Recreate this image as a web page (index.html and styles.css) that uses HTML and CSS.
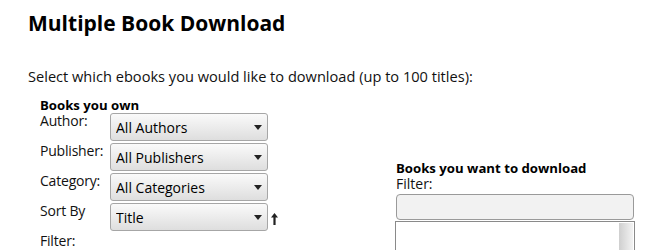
FILE: index.html
```html
<!DOCTYPE html>
<html lang="en">
<head>
    <meta charset="UTF-8">
    <meta name="viewport" content="width=device-width, initial-scale=1.0">
    <title>Multiple Book Download</title>
    <link rel="stylesheet" href="styles.css">
</head>
<body>
    <div class="page">
        <h1>Multiple Book Download</h1>
        <p class="intro">Select which ebooks you would like to download (up to 100 titles):</p>

        <div class="columns">
            <!-- Left: filters for owned books -->
            <div class="owned">
                <h3>Books you own</h3>
                <div class="filters">
                    <label for="author">Author:</label>
                    <div class="select-wrap">
                        <select id="author"><option>All Authors</option></select>
                        <svg class="caret" width="8" height="5" viewBox="0 0 8 5"><path d="M0 0h8L4 5z" fill="#222"/></svg>
                    </div>
                    <span></span>

                    <label for="publisher">Publisher:</label>
                    <div class="select-wrap">
                        <select id="publisher"><option>All Publishers</option></select>
                        <svg class="caret" width="8" height="5" viewBox="0 0 8 5"><path d="M0 0h8L4 5z" fill="#222"/></svg>
                    </div>
                    <span></span>

                    <label for="category">Category:</label>
                    <div class="select-wrap">
                        <select id="category"><option>All Categories</option></select>
                        <svg class="caret" width="8" height="5" viewBox="0 0 8 5"><path d="M0 0h8L4 5z" fill="#222"/></svg>
                    </div>
                    <span></span>

                    <label for="sort">Sort By</label>
                    <div class="select-wrap">
                        <select id="sort"><option>Title</option><option>Author</option></select>
                        <svg class="caret" width="8" height="5" viewBox="0 0 8 5"><path d="M0 0h8L4 5z" fill="#222"/></svg>
                    </div>
                    <button class="sort-dir" title="Ascending">
                        <svg width="7" height="12" viewBox="0 0 7 12"><path d="M3.5 0L7 4.5H4.6V12H2.4V4.5H0z" fill="#222"/></svg>
                    </button>

                    <label for="own-filter">Filter:</label>
                    <span></span>
                    <span></span>
                </div>
                <input type="text" id="own-filter" class="text-input">
            </div>

            <!-- Right: chosen books -->
            <div class="wanted">
                <h3>Books you want to download</h3>
                <label for="want-filter">Filter:</label>
                <input type="text" id="want-filter" class="text-input">
                <div class="listbox">
                    <div class="scrollbar"></div>
                </div>
            </div>
        </div>
    </div>
</body>
</html>
```

FILE: styles.css
```css
/* Reset */
* {
    margin: 0;
    padding: 0;
    box-sizing: border-box;
}

body {
    font-family: 'Open Sans', 'DejaVu Sans', sans-serif;
    font-size: 14px;
    line-height: 16px;
    color: #111;
    background-color: #fff;
}

.page {
    padding: 9px 28px 0;
}

h1 {
    font-size: 21px;
    line-height: 28px;
    font-weight: bold;
    color: #000;
}

.intro {
    margin-top: 31px;
    font-size: 14.6px;
}

h3 {
    font-size: 13.2px;
    font-weight: bold;
    color: #000;
}

/* Two columns */
.columns {
    display: flex;
    margin-top: 13px;
}

.owned {
    width: 356px;
    margin-left: 12px;
}

.filters {
    display: grid;
    grid-template-columns: 70px 158px 1fr;
    row-gap: 2px;
    align-items: start;
}

.filters label {
    display: block;
    letter-spacing: -0.2px;
}

.select-wrap {
    position: relative;
    height: 28px;
}

select {
    appearance: none;
    -webkit-appearance: none;
    width: 100%;
    height: 28px;
    padding: 0 20px 0 5px;
    font-family: 'Open Sans', sans-serif;
    font-size: 14px;
    color: #000;
    border: 1px solid #a6a6a6;
    border-radius: 3px;
    background: linear-gradient(#fafafa, #dedede);
}

.caret {
    position: absolute;
    right: 6px;
    top: 12px;
    pointer-events: none;
}

.sort-dir {
    justify-self: start;
    border: none;
    background: none;
    margin: 10px 0 0 3px;
    cursor: pointer;
    line-height: 0;
}

.text-input {
    display: block;
    height: 26px;
    border: 1px solid #9a9a9a;
    border-radius: 4px;
    background-color: #f2f2f2;
}

.owned .text-input {
    width: 158px;
    margin: 4px 0 0 70px;
}

.wanted {
    margin-top: 63px;
}

.wanted label {
    display: block;
}

.wanted .text-input {
    width: 238px;
    margin-top: 2px;
}

.listbox {
    width: 240px;
    height: 150px;
    margin: 1px 0 0 -1px;
    border: 1px solid #8a8a8a;
    display: flex;
    justify-content: flex-end;
    padding: 1px;
}

.scrollbar {
    width: 14px;
    height: 60px;
    background: linear-gradient(to right, #cfcfcf, #f3f3f3);
}
```
